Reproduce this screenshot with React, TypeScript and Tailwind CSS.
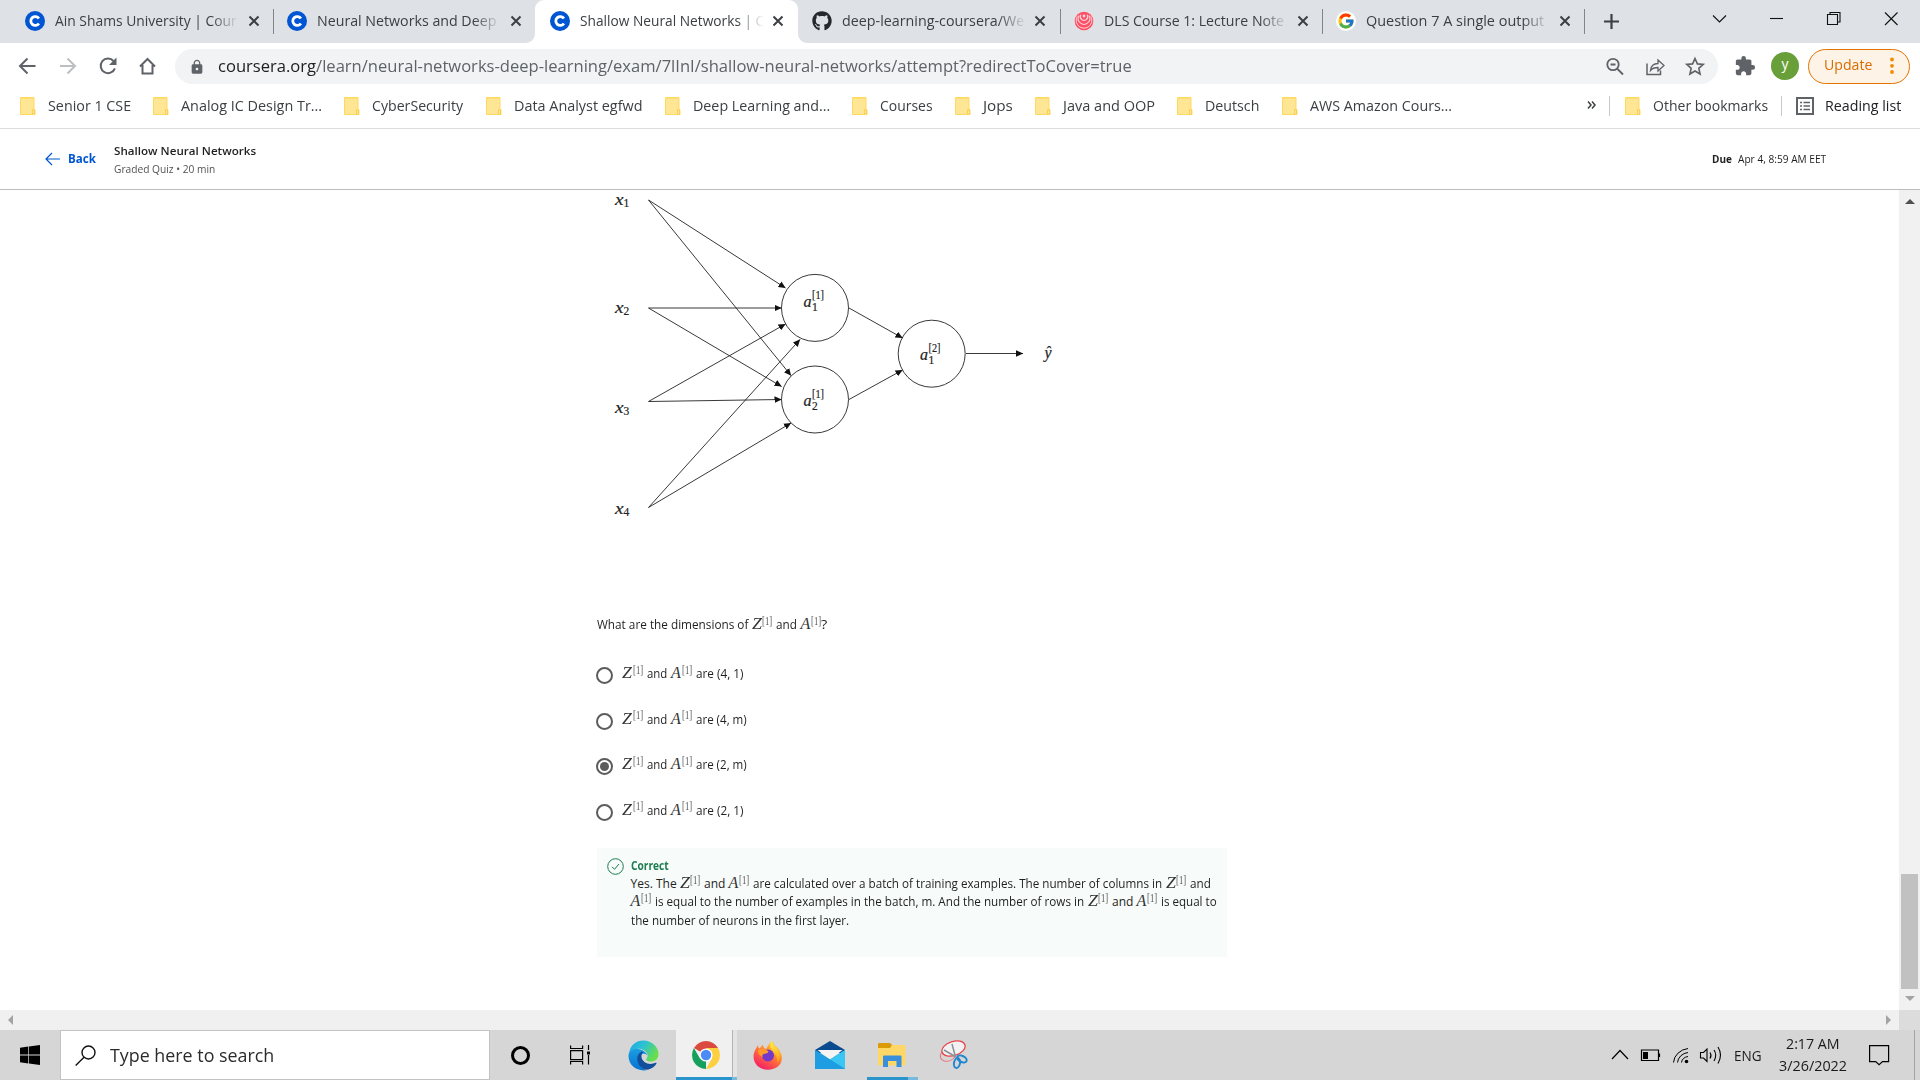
import React, { useLayoutEffect, useRef } from "react";
import { FaGithub } from "react-icons/fa";
import { MdExtension, MdLock } from "react-icons/md";
import { FcGoogle } from "react-icons/fc";

/* Text run condensed or widened to an exact width. */
function Fit({ w, className = "", children }: { w: number; className?: string; children: React.ReactNode }) {
  const ref = useRef<HTMLSpanElement>(null);
  useLayoutEffect(() => {
    const el = ref.current;
    if (!el) return;
    const apply = () => {
      if (el.offsetWidth) el.style.transform = `scaleX(${w / el.offsetWidth})`;
    };
    apply();
    document.fonts?.ready.then(apply);
  }, [w]);
  return (
    <span className={"inline-block shrink-0 whitespace-nowrap " + className} style={{ width: w }}>
      <span ref={ref} className="inline-block origin-left whitespace-nowrap">
        {children}
      </span>
    </span>
  );
}

function CourseraIcon() {
  return (
    <svg className="h-5 w-5 shrink-0" viewBox="0 0 20 20">
      <circle cx="10" cy="10" r="10" fill="#0056d2" />
      <path d="M13.900 7.600A4.400 4.400 0 1 0 13.900 12.400" fill="none" stroke="#fff" strokeWidth="2.800" />
    </svg>
  );
}

function SpiralIcon() {
  return (
    <svg className="h-5 w-5 shrink-0" viewBox="0 0 20 20" fill="none">
      <circle cx="10" cy="10" r="9.300" fill="#ff4f64" />
      <path d="M3.200 5.500A7.800 7.800 0 1 0 16.800 5.500" stroke="#fbd5dc" strokeWidth="1" />
      <path d="M5 4.500A5.800 5.800 0 1 0 15 4.500" stroke="#fbd5dc" strokeWidth="1.100" />
      <path d="M6.800 3.800A3.700 3.700 0 1 0 13.200 3.800" stroke="#fbd5dc" strokeWidth="1.200" />
      <circle cx="10" cy="5" r="1.400" fill="#fbd5dc" />
    </svg>
  );
}

const tabs = [
  { title: "Ain Shams University | Cour", w: 182, icon: <CourseraIcon /> },
  { title: "Neural Networks and Deep", w: 179, icon: <CourseraIcon /> },
  { title: "Shallow Neural Networks | C", w: 184, icon: <CourseraIcon />, active: true },
  { title: "deep-learning-coursera/We", w: 182, icon: <FaGithub className="h-5 w-5 shrink-0 text-[#24292f]" /> },
  { title: "DLS Course 1: Lecture Note", w: 180, icon: <SpiralIcon /> },
  {
    title: "Question 7 A single output",
    w: 178,
    icon: (
      <span className="flex h-5 w-5 shrink-0 items-center justify-center rounded-full bg-white">
        <FcGoogle className="h-[18px] w-[18px]" />
      </span>
    ),
  },
];

function TabBar() {
  return (
    <div className="flex h-[43px] bg-[#dee1e6] pl-[11px]">
      {tabs.map((t, i) => (
        <div
          key={t.title}
          className={
            "relative flex h-[43px] w-[262.200px] shrink-0 items-center pl-[14.300px] " +
            (t.active ? "rounded-t-[9px] bg-white" : "")
          }
        >
          {t.active && (
            <>
              <svg className="absolute bottom-0 -left-[9px] h-[9px] w-[9px]" viewBox="0 0 9 9">
                <path d="M9 0v9H0A9 9 0 0 0 9 0z" fill="#fff" />
              </svg>
              <svg className="absolute -right-[9px] bottom-0 h-[9px] w-[9px]" viewBox="0 0 9 9">
                <path d="M0 0v9h9A9 9 0 0 1 0 0z" fill="#fff" />
              </svg>
            </>
          )}
          <span className="-mt-px shrink-0">{t.icon}</span>
          <span className="-mt-[3px] ml-[10px] w-[184px] overflow-hidden text-[15px] leading-5 text-[#3c4043] [mask-image:linear-gradient(to_right,#000_85%,transparent_100%)]">
            <Fit w={t.w}>{t.title}</Fit>
          </span>
          <svg className="-mt-px ml-[8.500px] h-3 w-3 shrink-0" viewBox="0 0 12 12" stroke="#3c4043" strokeWidth="2">
            <path d="M1.500 1.500l9 9M10.500 1.500l-9 9" />
          </svg>
          {i !== 1 && i !== 2 && <span className="absolute top-[9px] -right-px h-[25px] w-px bg-[#80868b]" />}
        </div>
      ))}
      <svg className="mt-[14px] ml-[19.500px] h-[15px] w-[15px]" viewBox="0 0 15 15" stroke="#3c4043" strokeWidth="2.200">
        <path d="M7.500 0v15M0 7.500h15" />
      </svg>
      <svg className="ml-auto h-[43px] w-[240px]" viewBox="0 0 240 43" fill="none" stroke="#111" strokeWidth="1.100">
        <path d="M33 15.500l6.500 6.500 6.500-6.500" />
        <path d="M90 18.500h13" />
        <path d="M147.500 14.500h10v10h-10zM150 14.500v-2h10v9.500h-2.500" />
        <path d="M205 12.500l12.500 12.500M217.500 12.500L205 25" />
      </svg>
    </div>
  );
}

function Toolbar() {
  return (
    <div className="flex h-[46px] items-center pt-[1px]">
      <svg className="-mt-px h-[35px] w-[175px] shrink-0" viewBox="0 0 175 35" fill="none" stroke="#5f6368" strokeWidth="2">
        <path d="M35.500 17H20.500M27.500 9.500L20 17l7.500 7.500" />
        <path d="M60 17h15M67.500 9.500L75 17l-7.500 7.500" stroke="#bdbfc2" />
        <path d="M113.500 12A7.300 7.300 0 1 0 114.900 19.300" />
        <path d="M116.500 8.500v7.500H109z" fill="#5f6368" stroke="none" />
        <path d="M140 17.500l7.500-7.500 7.500 7.500M142.500 16v8.500h10V16" />
      </svg>
      <div className="flex h-[35px] w-[1543px] shrink-0 items-center rounded-full bg-[#f1f3f4]">
        <MdLock className="ml-[14px] h-4 w-4 text-[#5f6368]" />
        <Fit w={914} className="-mt-[2px] ml-[13px] text-[17px] leading-[22px] text-[#5f6368]">
          <span className="text-[#202124]">coursera.org</span>
          /learn/neural-networks-deep-learning/exam/7lInI/shallow-neural-networks/attempt?redirectToCover=true
        </Fit>
        <svg className="-mt-px mr-2 ml-auto h-[35px] w-[128px]" viewBox="0 0 128 35" fill="none" stroke="#5f6368" strokeWidth="1.800">
          <circle cx="31" cy="15.500" r="5.700" />
          <path d="M35 19.500l6 6M28.500 15.500h5" />
          <path d="M65 14.500V25.500h13.500v-4" strokeWidth="1.500" />
          <path d="M68.500 21.500c.5-5 3-7 7.500-7v-3.500l6 5.500-6 5.500v-3.500c-3.500 0-5.500.5-7.500 3z" strokeWidth="1.300" />
          <path d="M113 9.500l2.400 5.400 5.800.5-4.400 3.900 1.300 5.700-5.100-3-5.100 3 1.300-5.700-4.400-3.900 5.800-.5z" strokeWidth="1.600" />
        </svg>
      </div>
      <MdExtension className="-mt-px ml-4 h-[22px] w-[22px] shrink-0 text-[#5f6368]" />
      <span className="-mt-px ml-[15px] flex h-7 w-7 shrink-0 items-center justify-center rounded-full bg-[#689f38] text-[14px] leading-none text-white">
        <span className="-mt-[4px]">y</span>
      </span>
      <div className="ml-[9px] flex h-[35px] w-[102px] shrink-0 items-center rounded-full border border-[#e37400] bg-[#fdf3e7] pl-[15px] text-[15px] text-[#d96c00]">
        <Fit w={48} className="-mt-[4px]">
          Update
        </Fit>
        <svg className="-mt-px ml-[18px] h-[18px] w-1" viewBox="0 0 4 18" fill="#f28b00">
          <circle cx="2" cy="2.500" r="1.900" />
          <circle cx="2" cy="8.800" r="1.900" />
          <circle cx="2" cy="15" r="1.900" />
        </svg>
      </div>
    </div>
  );
}

function Folder() {
  return (
    <svg className="h-[18px] w-4 shrink-0" viewBox="0 0 16 18">
      <path d="M1 0h12.500a1 1 0 0 1 1 1v11l1 1v4a1 1 0 0 1-1 1H1a1 1 0 0 1-1-1V1a1 1 0 0 1 1-1z" fill="#ffd95e" />
      <path d="M1 1.500h12.500v10.500h-1v5H1z" fill="#ffe694" />
      <path d="M12.500 17v-4h2v4z" fill="#ffe9a0" stroke="#f3c845" strokeWidth=".7" />
    </svg>
  );
}

const bookmarks: [string, number][] = [
  ["Senior 1 CSE", 83],
  ["Analog IC Design Tr...", 141],
  ["CyberSecurity", 91.500],
  ["Data Analyst egfwd", 128.500],
  ["Deep Learning and...", 137],
  ["Courses", 53],
  ["Jops", 29.500],
  ["Java and OOP", 92],
  ["Deutsch", 54],
  ["AWS Amazon Cours...", 142],
];

function BookmarksBar() {
  return (
    <div className="flex h-10 items-center border-b border-[#dadce0] pr-[19px] pb-[6px] pl-[19.500px] text-[15px] leading-5 text-[#3c4043]">
      <div className="flex gap-[22.300px]">
        {bookmarks.map(([name, w]) => (
          <div key={name} className="flex items-center gap-3">
            <Folder />
            <Fit w={w} className="-mt-[2px]">
              {name}
            </Fit>
          </div>
        ))}
      </div>
      <svg className="-mt-[2px] ml-auto h-2 w-[9px]" viewBox="0 0 9 8" fill="none" stroke="#3c4043" strokeWidth="1.500">
        <path d="M1 .5L4 4 1 7.500M5 .5L8 4 5 7.500" />
      </svg>
      <span className="ml-[13px] h-5 w-px bg-[#c6c9cd]" />
      <span className="ml-[15px] flex items-center gap-3">
        <Folder />
        <Fit w={115} className="-mt-[2px]">
          Other bookmarks
        </Fit>
      </span>
      <span className="ml-[13px] h-5 w-px bg-[#c6c9cd]" />
      <svg className="ml-[14px] h-[18px] w-[18px]" viewBox="0 0 18 18" fill="none" stroke="#5f6368">
        <path d="M1 1h16v16H1z" strokeWidth="2" />
        <path d="M4 5.500h2M4 9h2M4 12.500h2M7.500 5.500H14M7.500 9H14M7.500 12.500H14" strokeWidth="1.500" />
      </svg>
      <Fit w={76} className="-mt-[2px] ml-[11.500px] text-[#202124]">
        Reading list
      </Fit>
    </div>
  );
}

function QuizHeader() {
  return (
    <div className="flex h-[61px] items-center border-b border-[#bdbdbd] pr-[93.500px] pl-[44.500px] text-[#1f1f1f]">
      <svg className="h-4 w-4" viewBox="0 0 16 16" fill="none" stroke="#0056d2" strokeWidth="1.200">
        <path d="M15 8H1M7 2L1 8l6 6" />
      </svg>
      <Fit w={28} className="ml-[7px] text-[12px] font-bold text-[#0056d2]">
        Back
      </Fit>
      <div className="mt-[2px] ml-[18px] flex flex-col">
        <Fit w={142.500} className="text-[11.500px] leading-[18px] font-semibold">
          Shallow Neural Networks
        </Fit>
        <Fit w={101} className="text-[11px] leading-[18px] text-[#525252]">
          Graded Quiz • 20 min
        </Fit>
      </div>
      <Fit w={20} className="ml-auto text-[11px] font-bold">
        Due
      </Fit>
      <Fit w={88.500} className="ml-[6px] text-[11px]">
        Apr 4, 8:59 AM EET
      </Fit>
    </div>
  );
}

/* Arrow endpoints in diagram coordinates. */
const edges = [
  [58.500, 10, 195.500, 98],
  [58.500, 10, 201, 185.500],
  [58.500, 118, 191.500, 118],
  [58.500, 118, 191.500, 196.500],
  [58.500, 211.500, 195.500, 134],
  [58.500, 211.500, 191.500, 209.500],
  [58.500, 317.500, 210, 149.500],
  [58.500, 317.500, 201, 233],
  [259, 118, 312.500, 148],
  [259, 209.500, 312.500, 180],
  [376, 163.500, 433, 163.500],
];

function NodeLabel({ x, y, sub, sup }: { x: number; y: number; sub: string; sup: string }) {
  return (
    <g>
      <text x={x} y={y} fontSize="16" fontStyle="italic">
        a
      </text>
      <text x={x + 8.500} y={y + 4} fontSize="11.500">
        {sub}
      </text>
      <text x={x + 8.500} y={y - 8} fontSize="12.500" textLength="12" lengthAdjust="spacingAndGlyphs">
        [{sup}]
      </text>
    </g>
  );
}

function NetworkDiagram() {
  return (
    <svg
      className="h-[350px] w-[500px]"
      viewBox="0 0 500 350"
      fill="none"
      stroke="#222"
      strokeWidth=".9"
      fontFamily='"Liberation Serif", serif'
    >
      <defs>
        <marker id="tip" viewBox="0 0 8 7" refX="7" refY="3.500" markerWidth="8" markerHeight="7" markerUnits="userSpaceOnUse" orient="auto">
          <path d="M0 .200l7.200 3.300L0 6.800z" fill="#111" stroke="none" />
        </marker>
      </defs>
      {edges.map(([x1, y1, x2, y2], i) => (
        <line key={i} x1={x1} y1={y1} x2={x2} y2={y2} markerEnd="url(#tip)" />
      ))}
      <circle cx="225" cy="117.900" r="33.500" />
      <circle cx="225" cy="209.500" r="33.500" />
      <circle cx="341.700" cy="163.700" r="33.500" />
      <g fill="#222" stroke="#222" strokeWidth=".2">
        {[
          ["1", 15],
          ["2", 123],
          ["3", 222.500],
          ["4", 323.500],
        ].map(([n, y]) => (
          <g key={n}>
            <text x="25" y={y} fontSize="16" fontStyle="italic" textLength="8.500" lengthAdjust="spacingAndGlyphs">
              x
            </text>
            <text x="33.500" y={Number(y) + 2} fontSize="11.500">
              {n}
            </text>
          </g>
        ))}
        <NodeLabel x={213.500} y={116.500} sub="1" sup="1" />
        <NodeLabel x={213.500} y={216} sub="2" sup="1" />
        <NodeLabel x={330} y={170} sub="1" sup="2" />
        <text x="454.500" y="168" fontSize="16" fontStyle="italic">
          ŷ
        </text>
      </g>
    </svg>
  );
}

/* Z or A with a bracketed layer index. */
function Var({ s }: { s: "Z" | "A" }) {
  return (
    <span className="inline-flex shrink-0 font-['Liberation_Serif',serif] text-[#333]">
      <Fit w={10} className="text-[16px] leading-[18px] italic">
        {s}
      </Fit>
      <Fit w={10} className="-mt-[3.500px] ml-[.500px] text-[13px] leading-[18px] text-[#555]">
        [1]
      </Fit>
    </span>
  );
}

function Option({ tail, w, checked }: { tail: string; w: number; checked?: boolean }) {
  return (
    <div className="flex h-[45.600px] items-start">
      <span className="mt-[3px] flex h-[17px] w-[17px] items-center justify-center rounded-full border-2 border-[#5c5c5c]">
        {checked && <span className="h-[9px] w-[9px] rounded-full bg-[#5c5c5c]" />}
      </span>
      <span className="ml-[9px] flex items-baseline">
        <Var s="Z" />
        <Fit w={20} className="ml-[4.500px]">
          and
        </Fit>
        <span className="w-1" />
        <Var s="A" />
        <Fit w={w} className="ml-[4px]">
          {tail}
        </Fit>
      </span>
    </div>
  );
}

function Quiz() {
  return (
    <div className="flex h-[820px] w-[1899px] flex-col overflow-hidden bg-white pl-[590px] text-[12px] leading-[18px] text-[#1f1f1f]">
      <div className="h-[350px] shrink-0">
        <NetworkDiagram />
      </div>
      <div className="mt-[75px] ml-[7px] flex h-[18px] items-baseline">
        <Fit w={151}>What are the dimensions of</Fit>
        <span className="w-[3.500px]" />
        <Var s="Z" />
        <Fit w={20.500} className="ml-[4px]">
          and
        </Fit>
        <span className="w-1" />
        <Var s="A" />
        <Fit w={6}>?</Fit>
      </div>
      <div className="mt-[31px] ml-[6px]">
        <Option tail="are (4, 1)" w={47} />
        <Option tail="are (4, m)" w={51} />
        <Option tail="are (2, m)" w={51} checked />
        <Option tail="are (2, 1)" w={47} />
      </div>
      <div className="mt-[1.500px] ml-[7px] flex h-[109px] w-[630px] shrink-0 bg-[#f7fbf9] pt-[10px] pl-[10px]">
        <svg className="h-[17px] w-[17px]" viewBox="0 0 17 17" fill="none" stroke="#1d7c50">
          <circle cx="8.500" cy="8.500" r="7.800" />
          <path d="M5 8.800l2.500 2.500L12 6" />
        </svg>
        <div className="-mt-[.500px] ml-[6.500px] flex flex-col">
          <Fit w={38} className="h-[17px] text-[11.500px] leading-[18px] font-bold text-[#1d7c50]">
            Correct
          </Fit>
          <div className="flex h-[18px] items-baseline">
            <Fit w={46}>Yes. The</Fit>
            <span className="w-[3px]" />
            <Var s="Z" />
            <Fit w={21} className="ml-[4px]">
              and
            </Fit>
            <span className="w-[3.500px]" />
            <Var s="A" />
            <Fit w={409} className="ml-[4px]">
              are calculated over a batch of training examples. The number of columns in
            </Fit>
            <span className="w-[3.500px]" />
            <Var s="Z" />
            <Fit w={20.500} className="ml-[4px]">
              and
            </Fit>
          </div>
          <div className="flex h-[20px] items-baseline">
            <Var s="A" />
            <Fit w={429} className="ml-[4px]">
              is equal to the number of examples in the batch, m. And the number of rows in
            </Fit>
            <span className="w-[3.500px]" />
            <Var s="Z" />
            <Fit w={21} className="ml-[4px]">
              and
            </Fit>
            <span className="w-[3.500px]" />
            <Var s="A" />
            <Fit w={56} className="ml-[4px]">
              is equal to
            </Fit>
          </div>
          <Fit w={218}>the number of neurons in the first layer.</Fit>
        </div>
      </div>
    </div>
  );
}

function VerticalScrollbar() {
  return (
    <div className="flex h-[820px] w-[21px] flex-col items-center bg-[#f1f1f1]">
      <svg className="mt-[9px] h-[5px] w-[10px]" viewBox="0 0 10 5">
        <path d="M0 5l5-5 5 5z" fill="#505050" />
      </svg>
      <span className="mt-auto h-[115px] w-[17px] bg-[#c1c1c1]" />
      <svg className="mt-[7px] mb-[9px] h-[5px] w-[10px]" viewBox="0 0 10 5">
        <path d="M0 0h10L5 5z" fill="#a3a3a3" />
      </svg>
    </div>
  );
}

function HorizontalScrollbar() {
  return (
    <div className="flex h-5 bg-[#dcdcdc]">
      <div className="flex w-[1899px] items-center justify-between bg-[#f0f0f0] pr-2 pl-2">
        <svg className="h-[10px] w-[5px]" viewBox="0 0 5 10">
          <path d="M5 0v10L0 5z" fill="#a3a3a3" />
        </svg>
        <svg className="h-[10px] w-[5px]" viewBox="0 0 5 10">
          <path d="M0 0v10l5-5z" fill="#a3a3a3" />
        </svg>
      </div>
    </div>
  );
}

function EdgeIcon() {
  return (
    <svg className="h-[31px] w-[31px]" viewBox="0 0 31 31">
      <defs>
        <linearGradient id="edgeTop" x1="0" x2="1" y2=".5">
          <stop offset="0" stopColor="#1ca4e8" />
          <stop offset=".5" stopColor="#2cc3d2" />
          <stop offset="1" stopColor="#68de4a" />
        </linearGradient>
        <linearGradient id="edgeLeft" x2="0" y2="1">
          <stop offset="0" stopColor="#1b9de2" />
          <stop offset="1" stopColor="#0673d0" />
        </linearGradient>
      </defs>
      <path d="M1 14C2 5 8 .5 15.500.5 24 .5 30.500 7 30.500 14c0 5-3.500 7.500-8 7.500-3.500 0-5-1.500-4-3 1-1.500 1.500-2.500 1-4C18 10 12 7.500 7 9.500 4 10.500 2 12 1 14z" fill="url(#edgeTop)" />
      <path d="M.5 16C.5 11 5 8.500 10 9c5 .5 9 4 9.300 6.500-2-3.500-9-2-9 4 0 6 5 10.500 9 10.500-9 2-18.800-4-18.800-14z" fill="url(#edgeLeft)" />
      <path d="M14 11.500c-3.500 1.500-5.500 5-4.500 9.500 1 5 5.500 9.500 11 8.500 3.500-1 6.500-3 8-6 .3-.7-.2-1-.8-.7C21 26 14 22 13.500 17c-.2-2 .5-4 2-5z" fill="#124f9b" />
    </svg>
  );
}

function ChromeIcon() {
  return (
    <svg className="h-7 w-7" viewBox="0 0 28 28">
      <path d="M14 14L1.900 7A14 14 0 0 1 26.100 7z" fill="#db4a3f" />
      <path d="M14 14v14A14 14 0 0 1 1.900 7L8 17.500z" fill="#16a05d" />
      <path d="M14 7h12.100A14 14 0 0 1 14 28l6-10.500z" fill="#fdd041" />
      <circle cx="14" cy="14" r="6.600" fill="#fff" />
      <circle cx="14" cy="14" r="5.200" fill="#4c8bf5" />
    </svg>
  );
}

function FirefoxIcon() {
  return (
    <svg className="h-[30px] w-[30px]" viewBox="0 0 30 30">
      <defs>
        <linearGradient id="foxBody" x1=".8" x2=".2" y2="1">
          <stop offset="0" stopColor="#ffe226" />
          <stop offset=".5" stopColor="#ff7139" />
          <stop offset="1" stopColor="#f5156c" />
        </linearGradient>
        <linearGradient id="foxTail" x2="0" y2="1">
          <stop offset="0" stopColor="#fff44f" />
          <stop offset="1" stopColor="#ff980e" />
        </linearGradient>
      </defs>
      <path d="M5 5c0 2 .5 3 1.500 3.500L10 4.500c0 2 1 3.500 3 4.500 2-3 3-6 7-8 0 4 3 5 5.500 8 5 7 4 13 0 17-6 5-15 5-21 0C-.5 21-.5 14 3 8.500z" fill="url(#foxBody)" />
      <path d="M19 1c0 4 4 6 6 9 3 5 2 10-1 13 1-5-1-8-4-11-3-3-4-7-1-11z" fill="url(#foxTail)" />
      <circle cx="15" cy="15.500" r="6" fill="#7339c9" />
      <path d="M5 10c3-2 8-1 10 1 1 1 0 2.500-4 3-2 .5-2 2-1 3-3-1-5-3-5-7z" fill="#ff9a2b" />
    </svg>
  );
}

function MailIcon() {
  return (
    <svg className="h-7 w-[30px]" viewBox="0 0 30 28">
      <path d="M0 9L15 0l15 9v3H0z" fill="#0a4a8e" />
      <path d="M2.500 9h25L15 19z" fill="#f4f4f4" />
      <path d="M0 9l15 9.500L30 9v19H0z" fill="#2aa7e6" />
      <path d="M15 18.500L30 9v19z" fill="#3bc5f2" />
      <path d="M0 9l30 19H0z" fill="#1f9de2" />
    </svg>
  );
}

function ExplorerIcon() {
  return (
    <svg className="h-6 w-7" viewBox="0 0 28 24">
      <path d="M0 1a1 1 0 0 1 1-1h11l2 2v4H0z" fill="#dc9a08" />
      <path d="M0 5h12l2-3h12.500a1 1 0 0 1 1 1v18.500a1 1 0 0 1-1 1H1a1 1 0 0 1-1-1z" fill="#ffd766" />
      <path d="M5 24V13.500a1 1 0 0 1 1-1h16.500a1 1 0 0 1 1 1V24h-5v-6h-8.500v6z" fill="#3a8fdc" />
    </svg>
  );
}

function SnipIcon() {
  return (
    <svg className="h-[30px] w-[30px]" viewBox="0 0 30 30" fill="none">
      <ellipse cx="9" cy="15" rx="8" ry="6" stroke="#e9757b" transform="rotate(-20 9 15)" />
      <ellipse cx="14.500" cy="8.500" rx="12" ry="7" fill="#f2f2f2" stroke="#e4484f" strokeWidth="1.300" transform="rotate(-18 14.500 8.500)" />
      <path d="M13 4l3.500 13M5 10l12 7" stroke="#8b9096" strokeWidth="1.500" />
      <ellipse cx="18" cy="23" rx="3" ry="5" stroke="#1f86cf" strokeWidth="2" transform="rotate(12 18 23)" />
      <ellipse cx="23" cy="19" rx="5" ry="3" stroke="#1f86cf" strokeWidth="2" transform="rotate(25 23 19)" />
    </svg>
  );
}

function Taskbar() {
  return (
    <div className="flex h-[50px] bg-[#d6d6d6] text-black">
      <div className="flex w-[60px] items-center justify-center">
        <svg className="h-5 w-5" viewBox="0 0 20 20" fill="#000">
          <path d="M0 2.800l8.300-1.200v8H0zM9 1.500L20 0v9.600H9zM0 10.400h8.300v8L0 17.200zM9 10.400h11V20L9 18.500z" />
        </svg>
      </div>
      <div className="flex w-[430px] items-center border border-[#c3c3c3] bg-white pl-[13.500px]">
        <svg className="h-[21px] w-[21px]" viewBox="0 0 21 21" fill="none" stroke="#111" strokeWidth="1.400">
          <circle cx="13.500" cy="7.500" r="6.500" />
          <path d="M9 12.200L.7 20.500" />
        </svg>
        <Fit w={164} className="-mt-px ml-[14.500px] text-[18.500px] leading-6 text-[#2b2b2b]">
          Type here to search
        </Fit>
      </div>
      <div className="flex w-[60px] items-center justify-center">
        <span className="h-[19px] w-[19px] rounded-full border-[3px] border-black" />
      </div>
      <div className="flex w-[60px] items-center justify-center">
        <svg className="h-5 w-[21px]" viewBox="0 0 21 20" fill="none" stroke="#000" strokeWidth="1.200">
          <path d="M.6 5.600h12v9H.6zM.6.500v3h12v-3M.6 19.500v-3h12v3M18.500 0v5M18.500 10v9.500" />
          <path d="M17 6.500h3v3h-3z" fill="#000" stroke="none" />
        </svg>
      </div>
      <div className="flex w-[66px] items-center justify-center pl-px">
        <EdgeIcon />
      </div>
      <div className="flex w-[56px] items-center justify-center border-b-[3px] border-[#2a94cd] bg-[#f0f0f0] pt-[2px] pl-[3px]">
        <ChromeIcon />
      </div>
      <div className="w-[5px] border-b-[3px] border-l border-b-[#78badf] border-l-[#b4b4b4] bg-[#e4e4e4]" />
      <div className="flex w-[62px] items-center justify-center">
        <FirefoxIcon />
      </div>
      <div className="flex w-[62px] items-center justify-center">
        <MailIcon />
      </div>
      <div className="ml-[6px] flex w-[41px] items-center justify-center border-b-[3px] border-[#2a94cd] pt-[2px] pl-[9px]">
        <ExplorerIcon />
      </div>
      <div className="w-[10px] border-b-[3px] border-[#78badf]" />
      <div className="flex w-[72px] items-center justify-center">
        <SnipIcon />
      </div>
      <svg className="ml-auto h-[50px] w-[120px]" viewBox="0 0 120 50" fill="none" stroke="#000" strokeWidth="1.200">
        <path d="M2 29l8-8.500 8 8.500" />
        <path d="M31.500 20h17v10.500h-17zM49.500 23.500v3.500" />
        <path d="M33 22h5v7h-5z" fill="#000" stroke="none" />
        <path d="M63.500 32.500A17 15 0 0 1 78 18.500M67.500 32.500A12 11 0 0 1 78 22.500M71.500 32.500A8 7 0 0 1 78 26.500" strokeWidth="1" />
        <circle cx="76.500" cy="31.500" r="1.800" fill="#000" stroke="none" />
        <path d="M90.500 22.500h3l3.500-3.500v12.500l-3.500-3.500h-3zM100 22.500q2 3 0 6M104 20q3.500 5 0 11M108 17q5 8 0 16.500" strokeWidth="1.100" />
      </svg>
      <Fit w={28} className="ml-1 text-[15px] leading-[50px] text-[#1a1a1a]">
        ENG
      </Fit>
      <div className="ml-[16.500px] flex w-[68px] flex-col items-center pt-[1.500px] text-[15px] leading-[22.500px] text-[#1a1a1a]">
        <Fit w={54}>2:17 AM</Fit>
        <Fit w={68}>3/26/2022</Fit>
      </div>
      <svg className="mt-[14px] mr-[24px] ml-[22.500px] h-[22px] w-[21px]" viewBox="0 0 21 22" fill="none" stroke="#000" strokeWidth="1.200">
        <path d="M.6 1.600h19v16h-6.100l-3.400 3-3.400-3H.6z" />
      </svg>
      <span className="mr-[5px] w-px bg-[#a5a5a5]" />
    </div>
  );
}

export default function App() {
  return (
    <div className="h-[1080px] w-[1920px] overflow-hidden bg-white font-['Open_Sans','Noto_Sans',sans-serif]">
      <TabBar />
      <Toolbar />
      <BookmarksBar />
      <QuizHeader />
      <div className="flex">
        <Quiz />
        <VerticalScrollbar />
      </div>
      <HorizontalScrollbar />
      <Taskbar />
    </div>
  );
}
